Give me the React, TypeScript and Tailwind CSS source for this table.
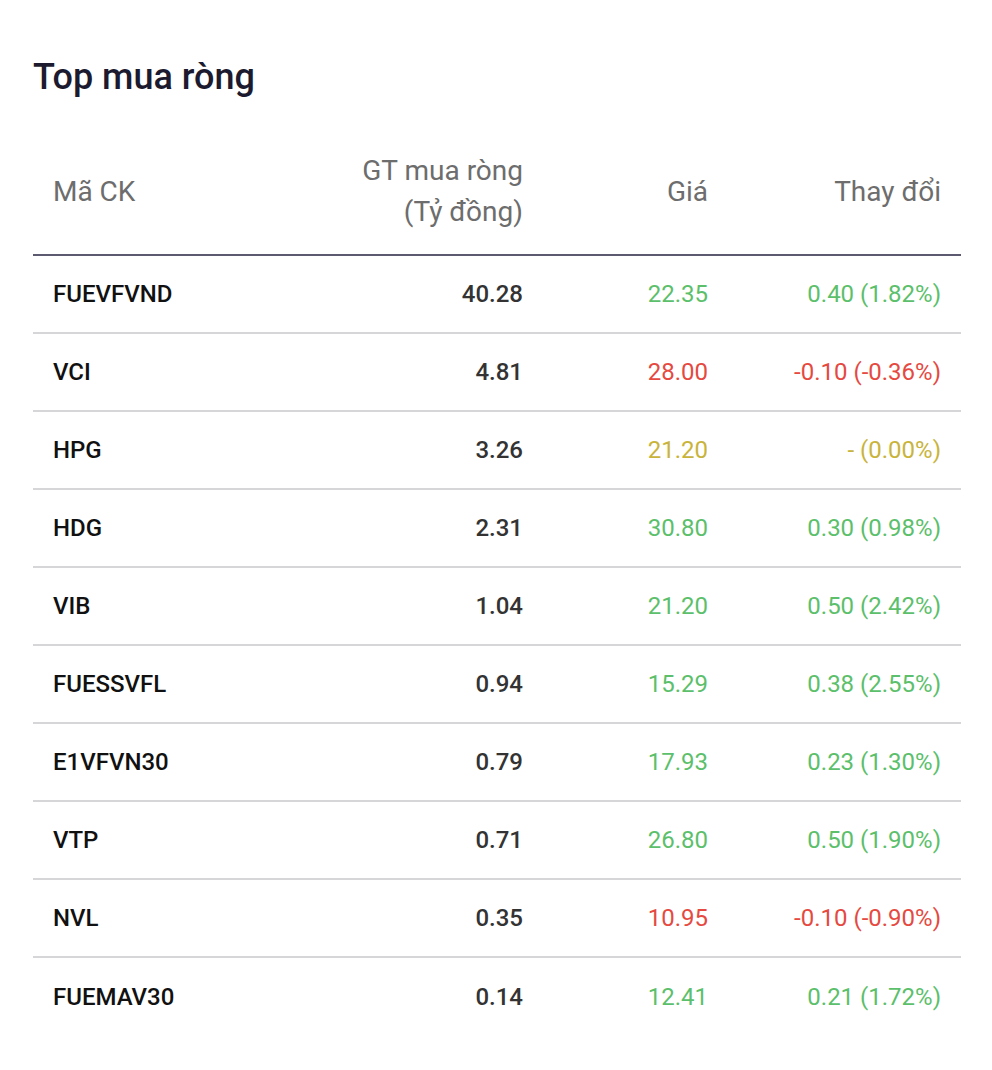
const rows = [
  { code: "FUEVFVND", value: "40.28", price: "22.35", change: "0.40 (1.82%)", tone: "up" },
  { code: "VCI", value: "4.81", price: "28.00", change: "-0.10 (-0.36%)", tone: "down" },
  { code: "HPG", value: "3.26", price: "21.20", change: "- (0.00%)", tone: "flat" },
  { code: "HDG", value: "2.31", price: "30.80", change: "0.30 (0.98%)", tone: "up" },
  { code: "VIB", value: "1.04", price: "21.20", change: "0.50 (2.42%)", tone: "up" },
  { code: "FUESSVFL", value: "0.94", price: "15.29", change: "0.38 (2.55%)", tone: "up" },
  { code: "E1VFVN30", value: "0.79", price: "17.93", change: "0.23 (1.30%)", tone: "up" },
  { code: "VTP", value: "0.71", price: "26.80", change: "0.50 (1.90%)", tone: "up" },
  { code: "NVL", value: "0.35", price: "10.95", change: "-0.10 (-0.90%)", tone: "down" },
  { code: "FUEMAV30", value: "0.14", price: "12.41", change: "0.21 (1.72%)", tone: "up" },
];

const toneClass: Record<string, string> = {
  up: "text-[#5cbf6b]",
  down: "text-[#e5493f]",
  flat: "text-[#c9b43b]",
};

export default function App() {
  return (
    <div className="min-h-[1070px] w-full bg-white font-['Roboto',sans-serif]">
      <div className="px-[33px] pt-[55px]">
        <h2 className="text-[36px] font-medium leading-[44px] text-[#1b1a2e]">Top mua ròng</h2>

        <table className="mt-[29px] w-[928px] table-fixed border-collapse">
          <colgroup>
            <col className="w-[250px]" />
            <col className="w-[260px]" />
            <col className="w-[185px]" />
            <col className="w-[233px]" />
          </colgroup>
          <thead>
            <tr className="border-b-2 border-[#5b5a70] text-[28px] leading-[41px] text-[#6d6d6d]">
              <th className="px-5 pb-[22px] pt-[22px] text-left font-normal">Mã CK</th>
              <th className="px-5 pb-[22px] pt-[22px] text-right font-normal">
                GT mua ròng
                <br />
                (Tỷ đồng)
              </th>
              <th className="px-5 pb-[22px] pt-[22px] text-right font-normal">Giá</th>
              <th className="px-5 pb-[22px] pt-[22px] text-right font-normal">Thay đổi</th>
            </tr>
          </thead>
          <tbody>
            {rows.map((r) => (
              <tr key={r.code} className="h-[78px] border-b-2 border-[#d6d6d8] text-[24px] last:border-b-0">
                <td className="px-5 text-left font-medium text-[#111111]">{r.code}</td>
                <td className="px-5 text-right font-medium text-[#333333]">{r.value}</td>
                <td className={`px-5 text-right ${toneClass[r.tone]}`}>{r.price}</td>
                <td className={`px-5 text-right ${toneClass[r.tone]}`}>{r.change}</td>
              </tr>
            ))}
          </tbody>
        </table>
      </div>
    </div>
  );
}
